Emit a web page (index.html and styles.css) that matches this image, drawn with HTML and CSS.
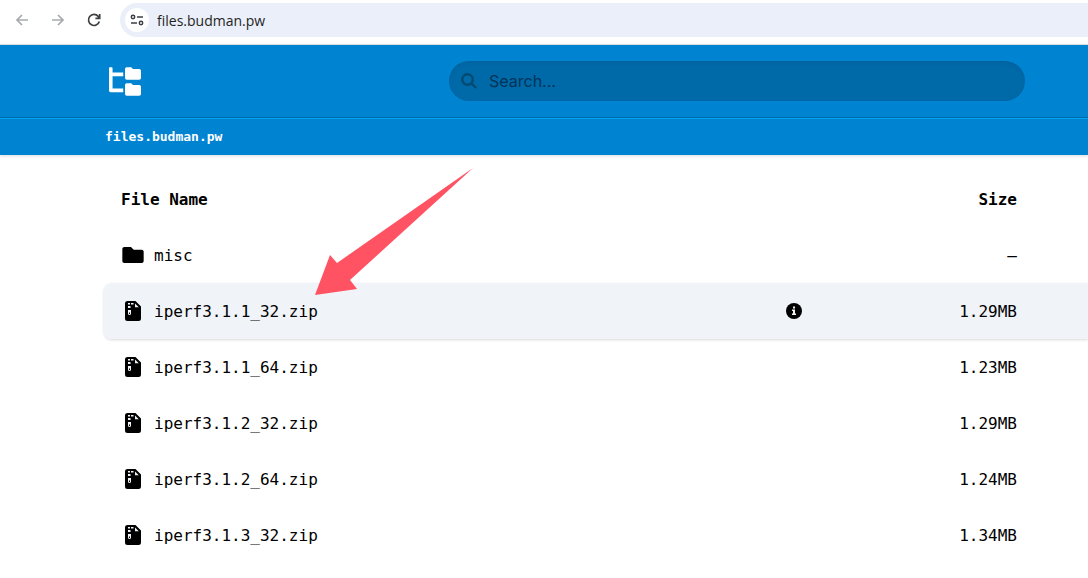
FILE: index.html
```
<!DOCTYPE html>
<html lang="en">
<head>
  <meta charset="utf-8">
  <title>files.budman.pw</title>
  <link rel="stylesheet" href="styles.css">
</head>
<body>
  <svg class="sprite" aria-hidden="true">
    <symbol id="folder" viewBox="0 64 512 384">
      <path d="M464 128H272l-64-64H48C21.500 64 0 85.500 0 112v288c0 26.500 21.500 48 48 48h416c26.500 0 48-21.500 48-48V176c0-26.500-21.500-48-48-48z"/>
    </symbol>
    <symbol id="zip" viewBox="0 0 16 20">
      <path d="M2.500 0H10.500l5.500 5.500v12a2.500 2.500 0 0 1-2.500 2.500h-11A2.500 2.500 0 0 1 0 17.500v-15A2.500 2.500 0 0 1 2.500 0z"/>
      <path class="zip-mark" d="M3 2h2v1.500H3zM6 2h2.500v1.500H6zM3 5h2.500v2H3zM10 2.500l3.800 3.800H10zM3 9h3v3.500a1.500 1.500 0 0 1-3 0z"/>
      <path d="M4 11.500h1v1.500H4z"/>
    </symbol>
  </svg>

  <div class="toolbar">
    <button class="nav-button muted" aria-label="Back">
      <svg viewBox="0 0 16 16"><path d="M14 8H3M8 3L3 8l5 5"/></svg>
    </button>
    <button class="nav-button muted" aria-label="Forward">
      <svg viewBox="0 0 16 16"><path d="M2 8h11M8 3l5 5-5 5"/></svg>
    </button>
    <button class="nav-button" aria-label="Reload">
      <svg viewBox="0 0 16 16"><path d="M13.300 9.500A5.500 5.500 0 1 1 12.200 4.400L13.500 6M13.700 2v4.300H9.400"/></svg>
    </button>
    <div class="address">
      <button class="site-info" aria-label="Site information">
        <svg viewBox="0 0 14 12"><circle cx="3" cy="3" r="1.700"/><path d="M7 3h6M1 9h6"/><circle cx="11" cy="9" r="1.700"/></svg>
      </button>
      <input class="url" type="text" value="files.budman.pw" aria-label="Address">
    </div>
  </div>

  <header class="header">
    <div class="header-top">
      <a class="logo" href="#" aria-label="Home">
        <svg viewBox="0 0 576 512">
          <path d="M64 16A16 16 0 0 0 48 0H16A16 16 0 0 0 0 16v400a32 32 0 0 0 32 32h224v-64H64V160h192V96H64z"/>
          <path d="M544 32H432L400 0h-80a32 32 0 0 0-32 32v160a32 32 0 0 0 32 32h224a32 32 0 0 0 32-32V64a32 32 0 0 0-32-32z"/>
          <path d="M544 320H432l-32-32h-80a32 32 0 0 0-32 32v160a32 32 0 0 0 32 32h224a32 32 0 0 0 32-32V352a32 32 0 0 0-32-32z"/>
        </svg>
      </a>
      <div class="search">
        <svg viewBox="0 0 16 16"><circle cx="6.500" cy="6.500" r="5.300"/><path d="M10.500 10.500L15 15"/></svg>
        <input type="text" placeholder="Search..." aria-label="Search">
      </div>
    </div>
    <nav class="breadcrumb">
      <a href="#">files.budman.pw</a>
    </nav>
  </header>

  <main class="content">
    <table class="files">
      <thead>
        <tr><th class="name">File Name</th><th class="info"></th><th class="size">Size</th></tr>
      </thead>
      <tbody>
        <tr>
          <td class="name"><a href="#"><svg class="icon-folder"><use href="#folder"/></svg>misc</a></td>
          <td class="info"></td>
          <td class="size">–</td>
        </tr>
        <tr class="active">
          <td class="name"><a href="#"><svg class="icon-zip"><use href="#zip"/></svg>iperf3.1.1_32.zip</a></td>
          <td class="info">
            <button class="info-button" aria-label="File info">
              <svg viewBox="0 0 16 16"><circle cx="8" cy="8" r="8"/><path class="info-mark" d="M7 3.500h2v2H7zM6 6.500h3v4h1V12H6v-1.500h1V8H6z"/></svg>
            </button>
          </td>
          <td class="size">1.29MB</td>
        </tr>
        <tr>
          <td class="name"><a href="#"><svg class="icon-zip"><use href="#zip"/></svg>iperf3.1.1_64.zip</a></td>
          <td class="info"></td>
          <td class="size">1.23MB</td>
        </tr>
        <tr>
          <td class="name"><a href="#"><svg class="icon-zip"><use href="#zip"/></svg>iperf3.1.2_32.zip</a></td>
          <td class="info"></td>
          <td class="size">1.29MB</td>
        </tr>
        <tr>
          <td class="name"><a href="#"><svg class="icon-zip"><use href="#zip"/></svg>iperf3.1.2_64.zip</a></td>
          <td class="info"></td>
          <td class="size">1.24MB</td>
        </tr>
        <tr>
          <td class="name"><a href="#"><svg class="icon-zip"><use href="#zip"/></svg>iperf3.1.3_32.zip</a></td>
          <td class="info"></td>
          <td class="size">1.34MB</td>
        </tr>
      </tbody>
    </table>
    <svg class="arrow" viewBox="0 0 158 127" aria-hidden="true"><path d="M158 0L22 95l-7-8L0 127l42-6-7-9z"/></svg>
  </main>
</body>
</html>
```
FILE: styles.css
```
* {
  box-sizing: border-box;
}

body {
  margin: 0;
  background: #ffffff;
  color: #000000;
  font-family: "DejaVu Sans Mono", monospace;
  font-size: 16px;
}

button {
  display: flex;
  align-items: center;
  justify-content: center;
  border: none;
  padding: 0;
  background: none;
  cursor: pointer;
}

a {
  color: inherit;
  text-decoration: none;
}

input {
  flex: 1;
  min-width: 0;
  border: none;
  padding: 0;
  background: none;
  outline: none;
}

.sprite {
  display: none;
}

/* browser toolbar */
.toolbar {
  display: flex;
  align-items: center;
  gap: 20px;
  height: 45px;
  padding: 0 0 4px 14px;
  border-bottom: 1px solid #dfe1e5;
}

.nav-button svg {
  width: 16px;
  height: 16px;
  fill: none;
  stroke: #3c4043;
  stroke-width: 1.7;
}

.nav-button.muted svg {
  stroke: #a8aaad;
}

.address {
  display: flex;
  align-items: center;
  flex: 1;
  gap: 8px;
  height: 34px;
  margin-left: -2px;
  padding-left: 5px;
  border-radius: 17px 0 0 17px;
  background: #ebeff9;
}

.site-info {
  width: 24px;
  height: 24px;
  border-radius: 50%;
  background: #ffffff;
}

.site-info svg {
  width: 14px;
  height: 12px;
  fill: none;
  stroke: #3c4043;
  stroke-width: 1.5;
}

.url {
  color: #1f1f1f;
  font-family: "Open Sans", sans-serif;
  font-size: 14px;
}

/* site header */
.header {
  background: #0084d1;
  color: #ffffff;
  box-shadow: 0 1px 3px rgba(0, 0, 0, 0.15);
}

.header-top {
  display: flex;
  align-items: center;
  justify-content: space-between;
  padding: 16px 63px 16px 109px;
  border-bottom: 1px solid #0069a8;
}

.logo svg {
  display: block;
  width: 32px;
  height: 29px;
  fill: #ffffff;
}

.search {
  display: flex;
  align-items: center;
  flex: 0 1 576px;
  gap: 12px;
  height: 40px;
  padding: 0 12px;
  border-radius: 20px;
  background: #0069a8;
  box-shadow: inset 0 2px 4px rgba(0, 0, 0, 0.06);
}

.search svg {
  width: 16px;
  height: 16px;
  fill: none;
  stroke: #024a70;
  stroke-width: 2.4;
}

.search input {
  color: #003358;
  font-family: Inter, sans-serif;
  font-size: 16px;
}

.search input::placeholder {
  color: #003358;
  opacity: 1;
}

.breadcrumb {
  padding: 8px 105px;
  border-top: 1px solid #00a6f4;
  font-size: 13px;
  font-weight: bold;
  line-height: 20px;
}

/* file list */
.content {
  position: relative;
  padding: 16px 0 0 104px;
}

.files {
  width: 100%;
  border-spacing: 0;
}

.files tr {
  height: 56px;
  border-radius: 8px 0 0 8px;
}

.files .active {
  box-shadow: 0 1px 3px rgba(0, 0, 0, 0.15);
}

.files .active td {
  background: #f0f3f8;
}

.files .active .name {
  border-radius: 8px 0 0 8px;
}

.files th,
.files td {
  padding: 0;
  text-align: left;
}

.files .name {
  padding-left: 17px;
}

.files .info {
  width: 32px;
}

.files .size {
  width: 270px;
  padding-right: 71px;
  text-align: right;
}

.name a {
  display: flex;
  align-items: center;
  gap: 9px;
}

.icon-folder {
  width: 24px;
  height: 16px;
}

.icon-zip {
  width: 24px;
  height: 20px;
}

.zip-mark,
.info-mark {
  fill: #f0f3f8;
}

.info-button svg {
  width: 16px;
  height: 16px;
}

/* pointer to the highlighted file */
.arrow {
  position: absolute;
  top: 13px;
  left: 315px;
  width: 158px;
  height: 127px;
  fill: #ff5263;
  pointer-events: none;
}
```
